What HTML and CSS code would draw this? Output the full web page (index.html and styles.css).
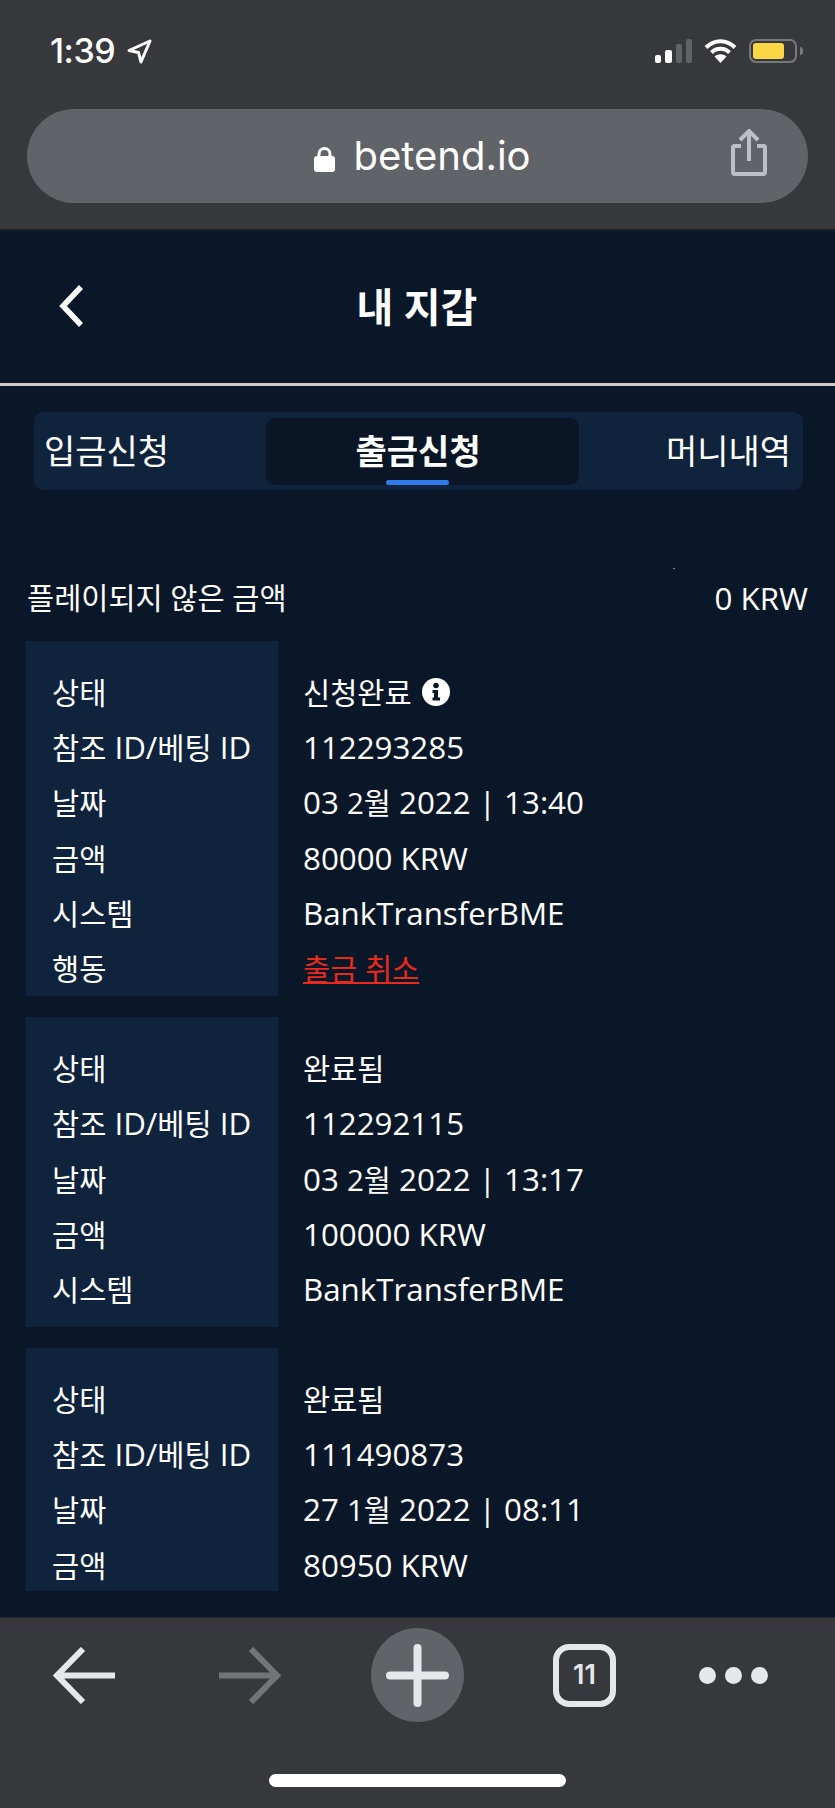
FILE: index.html
```html
<!DOCTYPE html>
<html lang="ko">
<head>
    <meta charset="UTF-8" />
    <meta name="viewport" content="width=device-width, initial-scale=1.0"/>
    <title>내 지갑 - betend.io</title>
    <link rel="stylesheet" href="styles.css">
</head>
<body>

    <!-- Browser top bar -->
    <div class="browser-top">
        <div class="statusbar">
            <div class="statusbar-left">
                <span class="clock">1:39</span>
                <svg class="icon-location" viewBox="0 0 25 25"><path d="M23 2 2 11.500 11.500 13.500 14 23Z" fill="none" stroke="#fff" stroke-width="3" stroke-linejoin="round"/></svg>
            </div>
            <div class="statusbar-right">
                <svg class="icon-signal" viewBox="0 0 37 24">
                    <rect x="0" y="16" width="6" height="8" rx="2" fill="#fff"/>
                    <rect x="10" y="11" width="7" height="13" rx="2" fill="#fff"/>
                    <rect x="21" y="5" width="6" height="19" rx="2" fill="#616265"/>
                    <rect x="31" y="0" width="6" height="24" rx="2" fill="#616265"/>
                </svg>
                <svg class="icon-wifi" viewBox="0 0 33 25">
                    <path d="M2 9.500C10.500 1 22.500 1 31 9.500" fill="none" stroke="#fff" stroke-width="4"/>
                    <path d="M7.500 14.500C12.500 9.500 20.500 9.500 25.500 14.500" fill="none" stroke="#fff" stroke-width="4"/>
                    <path d="M16.500 25 10.500 18.500C14 15.500 19 15.500 22.500 18.500Z" fill="#fff"/>
                </svg>
                <div class="battery">
                    <div class="battery-fill"></div>
                </div>
                <div class="battery-nub"></div>
            </div>
        </div>
        <div class="urlbar">
            <svg class="icon-lock" viewBox="0 0 21 25">
                <path d="M5 11V7a5.500 5.500 0 0 1 11 0v4" fill="none" stroke="#fff" stroke-width="3"/>
                <rect x="0" y="9" width="21" height="16" rx="3" fill="#fff"/>
            </svg>
            <span class="url-text">betend.io</span>
            <svg class="icon-share" viewBox="0 0 36 47">
                <path d="M10 17H3.500A1.500 1.500 0 0 0 2 18.500V43a2 2 0 0 0 2 2H32a2 2 0 0 0 2-2V18.500A1.500 1.500 0 0 0 32.500 17H26" fill="none" stroke="#bcbfc4" stroke-width="4"/>
                <path d="M18 32V3M9 11 18 2 27 11" fill="none" stroke="#bcbfc4" stroke-width="4"/>
            </svg>
        </div>
    </div>

    <!-- Page -->
    <div class="page">
        <div class="page-header">
            <a href="#" class="back-link">
                <svg class="icon-chevron" viewBox="0 0 25 42"><path d="M22 2 4 21 22 40" fill="none" stroke="#fff" stroke-width="5.500"/></svg>
            </a>
            <div class="page-title">내 지갑</div>
        </div>

        <div class="section">
            <!-- Tabs -->
            <div class="tabs">
                <a href="#" class="tab">입금신청</a>
                <a href="#" class="tab tab-active">출금신청</a>
                <a href="#" class="tab tab-last">머니내역</a>
            </div>

            <div class="summary">
                <span class="ko">플레이되지 않은 금액</span>
                <span>0 KRW</span>
                <i class="speck"></i>
            </div>

            <!-- Request 1 -->
            <div class="card">
                <div class="card-labels">
                    <div class="row ko">상태</div>
                    <div class="row"><span class="ko">참조</span> ID/<span class="ko">베팅</span> ID</div>
                    <div class="row ko">날짜</div>
                    <div class="row ko">금액</div>
                    <div class="row ko">시스템</div>
                    <div class="row ko">행동</div>
                </div>
                <div class="card-values">
                    <div class="row ko">신청완료
                        <svg class="icon-info" viewBox="0 0 28 28">
                            <circle cx="14" cy="14" r="14" fill="#fff"/>
                            <circle cx="14" cy="7.500" r="2.800" fill="#0a1728"/>
                            <path d="M10.500 12H16V19.500H18V22.500H10.500V19.500H12V15H10.500Z" fill="#0a1728"/>
                        </svg>
                    </div>
                    <div class="row">112293285</div>
                    <div class="row">03 <span class="ko">2월</span> 2022 | 13:40</div>
                    <div class="row">80000 KRW</div>
                    <div class="row">BankTransferBME</div>
                    <div class="row ko"><a href="#" class="cancel-link">출금 취소</a></div>
                </div>
            </div>

            <!-- Request 2 -->
            <div class="card card-padded">
                <div class="card-labels">
                    <div class="row ko">상태</div>
                    <div class="row"><span class="ko">참조</span> ID/<span class="ko">베팅</span> ID</div>
                    <div class="row ko">날짜</div>
                    <div class="row ko">금액</div>
                    <div class="row ko">시스템</div>
                </div>
                <div class="card-values">
                    <div class="row ko">완료됨</div>
                    <div class="row">112292115</div>
                    <div class="row">03 <span class="ko">2월</span> 2022 | 13:17</div>
                    <div class="row">100000 KRW</div>
                    <div class="row">BankTransferBME</div>
                </div>
            </div>

            <!-- Request 3 -->
            <div class="card card-cut">
                <div class="card-labels">
                    <div class="row ko">상태</div>
                    <div class="row"><span class="ko">참조</span> ID/<span class="ko">베팅</span> ID</div>
                    <div class="row ko">날짜</div>
                    <div class="row ko">금액</div>
                </div>
                <div class="card-values">
                    <div class="row ko">완료됨</div>
                    <div class="row">111490873</div>
                    <div class="row">27 <span class="ko">1월</span> 2022 | 08:11</div>
                    <div class="row">80950 KRW</div>
                </div>
            </div>
        </div>
    </div>

    <!-- Browser bottom bar -->
    <div class="browser-bottom">
        <div class="toolbar">
            <svg class="icon-arrow" viewBox="0 0 62 57"><path d="M30 2 4 28.500 30 55M4 28.500H62" fill="none" stroke="#e6e7ea" stroke-width="6"/></svg>
            <svg class="icon-arrow icon-forward" viewBox="0 0 62 57"><path d="M32 2 58 28.500 32 55M58 28.500H0" fill="none" stroke="#737476" stroke-width="6"/></svg>
            <div class="plus-button">
                <svg class="icon-plus" viewBox="0 0 63 63"><path d="M31.500 4V59M4 31.500H59" fill="none" stroke="#e6e7ea" stroke-width="8" stroke-linecap="round"/></svg>
            </div>
            <div class="tab-count">11</div>
            <div class="more-dots"><span></span><span></span><span></span></div>
        </div>
        <div class="home-bar"></div>
    </div>

</body>
</html>
```

FILE: styles.css
```css
body {
    font-family: 'Open Sans', 'Noto Sans CJK KR', sans-serif;
    background-color: #0a1728;
    margin: 0;
    padding: 0;
    color: #fff;
    height: 1808px;
    display: flex;
    flex-direction: column;
    overflow: hidden;
}

a {
    color: inherit;
    text-decoration: none;
}

/* Hangul runs smaller than the latin around them */
.ko {
    font-size: 29.500px;
}

/* Browser top bar */
.browser-top {
    background-color: #37383c;
    height: 229px;
    flex: none;
    border-bottom: 2px solid #1d2026;
    box-sizing: content-box;
}

.statusbar {
    display: flex;
    justify-content: space-between;
    height: 109px;
    box-sizing: border-box;
    padding: 32px 32px 0 50px;
}

.statusbar-left {
    display: flex;
    align-items: flex-start;
    gap: 12px;
}

.clock {
    font-family: 'Inter', sans-serif;
    font-size: 34px;
    font-weight: 500;
    line-height: 38px;
    letter-spacing: -0.5px;
}

.icon-location {
    width: 25px;
    height: 25px;
    margin-top: 7px;
}

.statusbar-right {
    display: flex;
    align-items: flex-start;
    padding-top: 6px;
}

.icon-signal {
    width: 37px;
    height: 24px;
    margin-top: 1px;
}

.icon-wifi {
    width: 33px;
    height: 25px;
    margin-left: 12px;
}

.battery {
    width: 48px;
    height: 24px;
    margin-left: 12px;
    margin-top: 1px;
    border: 2px solid #77787b;
    border-radius: 7px;
    box-sizing: border-box;
    padding: 2px;
}

.battery-fill {
    width: 31px;
    height: 16px;
    background-color: #fbd747;
    border-radius: 3px;
}

.battery-nub {
    width: 3px;
    height: 8px;
    margin-top: 9px;
    margin-left: 3px;
    background-color: #77787b;
    border-radius: 0 3px 3px 0;
}

.urlbar {
    position: relative;
    display: flex;
    align-items: center;
    justify-content: center;
    height: 94px;
    margin: 0 27px;
    padding-left: 10px;
    background-color: #606368;
    border-radius: 47px;
}

.icon-lock {
    width: 21px;
    height: 25px;
    margin-right: 18px;
    margin-top: 6px;
}

.url-text {
    font-family: 'Inter', sans-serif;
    font-size: 40px;
    font-weight: 400;
    line-height: 46px;
}

.icon-share {
    position: absolute;
    right: 41px;
    top: 20px;
    width: 36px;
    height: 47px;
}

/* Page */
.page {
    flex: 1;
    min-height: 0;
    overflow: hidden;
}

.page-header {
    display: grid;
    grid-template-columns: 1fr auto 1fr;
    align-items: center;
    height: 155px;
    border-bottom: 3px solid #c9c9c9;
    box-sizing: border-box;
    padding-left: 59px;
}

.icon-chevron {
    display: block;
    width: 25px;
    height: 42px;
    margin-bottom: 3px;
}

.page-title {
    font-size: 40px;
    font-weight: 700;
    line-height: 50px;
    transform: translateX(-30px);
}

.section {
    padding: 26px 27px 0 26px;
}

/* Tabs */
.tabs {
    display: flex;
    align-items: stretch;
    height: 78px;
    margin: 0 5px 0 8px;
    padding: 6px 12px 5px 10px;
    box-sizing: border-box;
    background-color: #10233d;
    border-radius: 9px;
    font-size: 34px;
    line-height: 67px;
}

.tab-active {
    position: relative;
    width: 313px;
    margin-left: 97px;
    padding-right: 9px;
    box-sizing: border-box;
    text-align: center;
    font-weight: 700;
    background-color: #0a1626;
    border-radius: 9px;
}

.tab-active::after {
    content: "";
    position: absolute;
    left: 120px;
    bottom: 0;
    width: 63px;
    height: 5px;
    background-color: #2f7bea;
    border-radius: 3px;
}

.tab-last {
    margin-left: auto;
}

/* Summary line */
.summary {
    position: relative;
    display: flex;
    justify-content: space-between;
    margin: 88px 0 0 1px;
    height: 40px;
    font-size: 31.300px;
    line-height: 40px;
    margin-bottom: 23px;
}

.speck {
    position: absolute;
    left: 646px;
    top: -10px;
    width: 2px;
    height: 1px;
    background-color: #7c8590;
}

/* Request cards */
.card {
    display: flex;
    font-size: 31.300px;
    margin-bottom: 21px;
}

.card-padded .card-labels {
    padding-bottom: 10px;
}

.card-cut {
    height: 243px;
    overflow: hidden;
}

.card-labels {
    width: 252px;
    padding: 24px 0 0 26px;
    box-sizing: border-box;
    background-color: #10233d;
}

.card-values {
    padding: 24px 0 0 25px;
}

.row {
    height: 55.200px;
    line-height: 55.200px;
    white-space: nowrap;
}

.icon-info {
    width: 28px;
    height: 28px;
    margin-left: 3px;
    vertical-align: -2px;
}

.cancel-link {
    color: #e8291c;
    text-decoration: underline;
}

/* Browser bottom bar */
.browser-bottom {
    flex: none;
    height: 191px;
    box-sizing: border-box;
    background-color: #37383c;
    border-top: 1px solid #24262b;
}

.toolbar {
    position: relative;
    display: flex;
    align-items: center;
    height: 94px;
    margin-top: 10px;
    padding-left: 53px;
}

.icon-arrow {
    width: 62px;
    height: 57px;
    flex: none;
}

.icon-forward {
    margin-left: 104px;
}

.plus-button {
    display: flex;
    align-items: center;
    justify-content: center;
    width: 93px;
    height: 94px;
    margin-left: 90px;
    flex: none;
    border-radius: 50%;
    background-color: #606368;
}

.icon-plus {
    width: 63px;
    height: 63px;
}

.tab-count {
    width: 63px;
    height: 63px;
    margin-left: 89px;
    flex: none;
    box-sizing: border-box;
    border: 6px solid #e6e7ea;
    border-radius: 16px;
    text-align: center;
    font-family: 'Inter', sans-serif;
    font-size: 27px;
    font-weight: 600;
    line-height: 50px;
    color: #e6e7ea;
}

.more-dots {
    display: flex;
    gap: 9px;
    margin-left: 83px;
}

.more-dots span {
    width: 17px;
    height: 17px;
    border-radius: 50%;
    background-color: #e6e7ea;
}

.home-bar {
    width: 297px;
    height: 13px;
    margin: 52px auto 0;
    background-color: #fff;
    border-radius: 7px;
}
```
